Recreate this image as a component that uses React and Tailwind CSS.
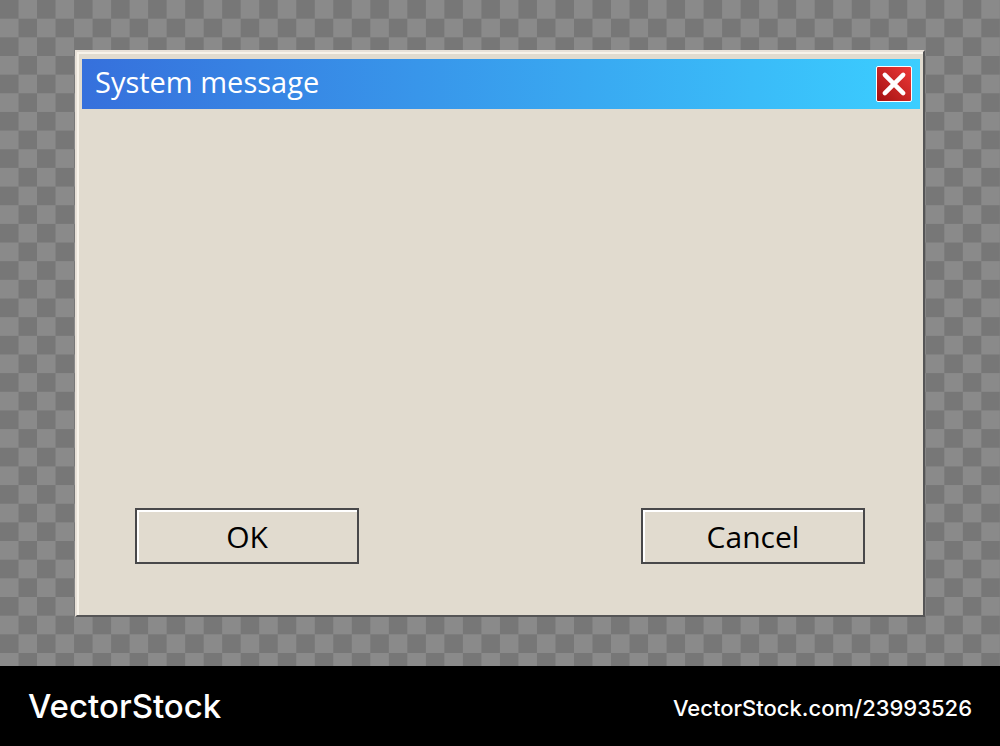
import React from "react";

const DialogButton = ({ children }) => (
  <button
    type="button"
    className="h-14 w-56 border-2 border-[#48484a] bg-[#e1dbcf] pt-px text-center text-[30px] leading-[50px] text-black shadow-[inset_2px_2px_0_#ffffff]"
  >
    {children}
  </button>
);

const CloseIcon = () => (
  <svg viewBox="0 0 36 36" className="h-full w-full" aria-hidden="true">
    <path
      d="M8.3 8.3 27.7 27.7M27.7 8.3 8.3 27.7"
      stroke="#ffffff"
      strokeWidth="4.8"
      strokeLinecap="round"
      fill="none"
    />
  </svg>
);

const App = () => {
  return (
    <div className="flex min-h-screen flex-col bg-black">
      <main className="flex flex-1 bg-[conic-gradient(#8a8a8a_25%,#777777_0_50%,#8a8a8a_0_75%,#777777_0)] bg-[length:calc(100%/27)_5.603%] px-[75px] pt-[50px] pb-[49px] font-['Open_Sans','Noto_Sans',sans-serif]">
        <section
          role="dialog"
          aria-labelledby="dialog-title"
          className="flex flex-1 flex-col border-2 border-t-[#e8e1d8] border-r-[#555556] border-b-[#555556] border-l-[#e8e1d8] bg-[#e1dbcf] pt-[7px] pr-[3px] pl-[5px] shadow-[inset_2px_2px_0_#f8f3ea]"
        >
          <header className="flex h-[50px] items-center justify-between bg-linear-to-r/srgb from-[#3670dc] to-[#3bceff] pr-2 pl-[13px]">
            <h1 id="dialog-title" className="pb-1 text-[29px] leading-10 text-white">
              System message
            </h1>
            <button
              type="button"
              aria-label="Close"
              className="h-9 w-9 rounded-xs border border-white bg-linear-to-tr from-[#a30f0f] to-[#ee3838]"
            >
              <CloseIcon />
            </button>
          </header>
          <div className="flex flex-1 items-end justify-between pr-[55px] pb-[51px] pl-[53px]">
            <DialogButton>OK</DialogButton>
            <DialogButton>Cancel</DialogButton>
          </div>
        </section>
      </main>
      <footer className="flex h-20 items-center justify-between px-7 font-['Inter','Liberation_Sans',sans-serif] font-medium text-white">
        <span className="text-[33px] leading-10">VectorStock</span>
        <a href="#" className="pt-1 text-[22px] leading-8">
          VectorStock.com/23993526
        </a>
      </footer>
    </div>
  );
};

export default App;
